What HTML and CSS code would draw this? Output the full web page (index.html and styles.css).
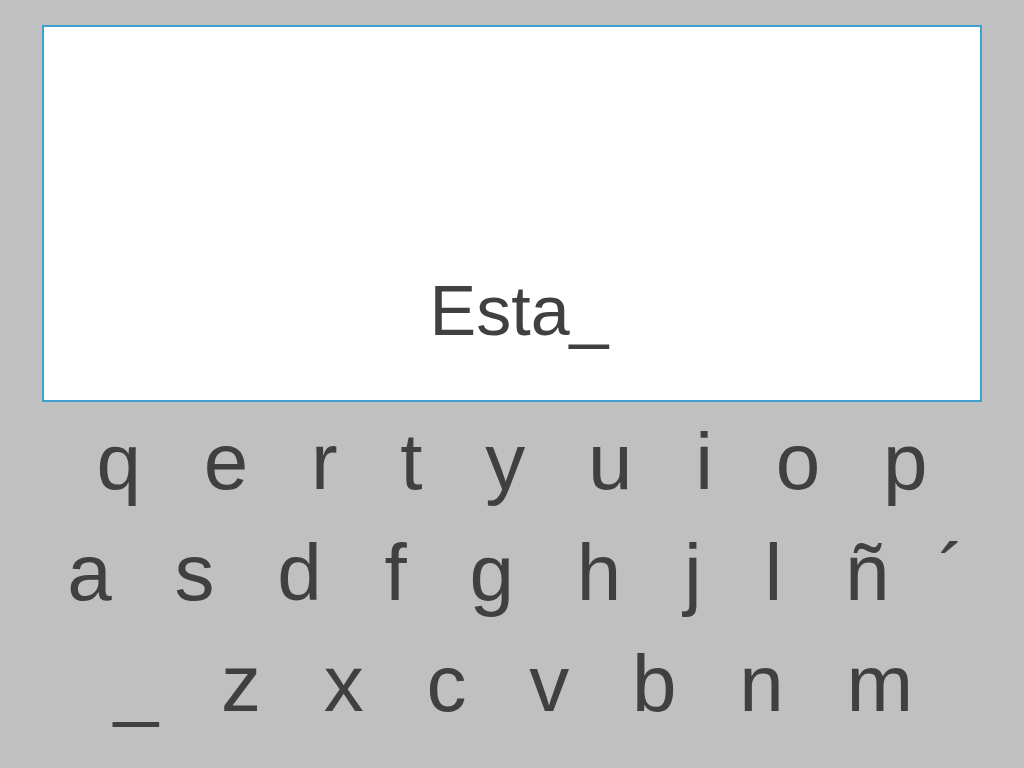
FILE: index.html
```html
<!DOCTYPE html>
<html lang="es">
<head>
<meta charset="utf-8">
<title>Teclado</title>
<link rel="stylesheet" href="styles.css">
</head>
<body>
<div class="screen">
  <div class="display">
    <div class="typed">Esta_</div>
  </div>
  <div class="keyboard">
    <div class="row row-1">
      <span class="key">q</span><span class="key">e</span><span class="key">r</span><span class="key">t</span><span class="key">y</span><span class="key">u</span><span class="key">i</span><span class="key">o</span><span class="key">p</span>
    </div>
    <div class="row row-2">
      <span class="key">a</span><span class="key">s</span><span class="key">d</span><span class="key">f</span><span class="key">g</span><span class="key">h</span><span class="key">j</span><span class="key">l</span><span class="key">ñ</span><span class="key key-accent">´</span>
    </div>
    <div class="row row-3">
      <span class="key">_</span><span class="key">z</span><span class="key">x</span><span class="key">c</span><span class="key">v</span><span class="key">b</span><span class="key">n</span><span class="key">m</span>
    </div>
  </div>
</div>
</body>
</html>
```

FILE: styles.css
```css
html, body {
  margin: 0;
  padding: 0;
  background: #c0c0c0;
}

body {
  width: 1024px;
  height: 768px;
  overflow: hidden;
  font-family: "Liberation Sans", Arial, sans-serif;
  color: #404040;
}

.screen {
  padding: 25px 42px 0 42px;
}

.display {
  box-sizing: border-box;
  width: 940px;
  height: 377px;
  background: #ffffff;
  border: 2px solid #3fa0d2;
  display: flex;
  align-items: flex-end;
  justify-content: center;
  padding: 0 0 49px 14px;
}

.typed {
  font-size: 70px;
  line-height: 80px;
}

.keyboard {
  margin-top: 4px;
  margin-left: -42px;
  width: 1024px;
}

.row {
  display: flex;
  justify-content: center;
  gap: 62.75px;
  font-size: 80px;
  line-height: 111px;
  height: 111px;
}

.row-2 {
  padding-left: 8px;
}

.row-3 {
  padding-left: 3px;
}

.key {
  display: block;
}

.key-accent {
  margin-left: -14px;
}
```
